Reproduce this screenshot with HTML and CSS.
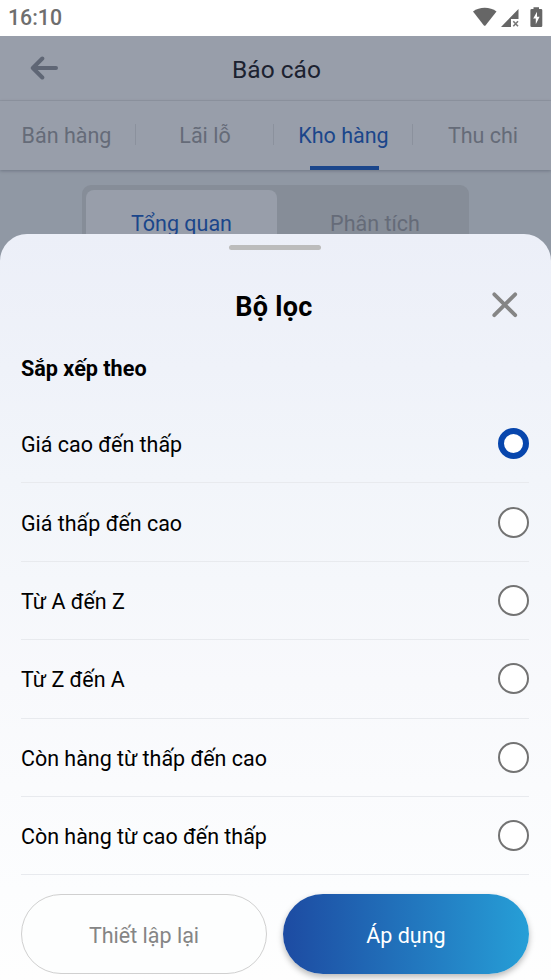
FILE: index.html
```html
<!DOCTYPE html>
<html lang="vi">
<head>
<meta charset="utf-8">
<title>Báo cáo</title>
<link rel="stylesheet" href="styles.css">
</head>
<body>
<div class="status">
  <span class="clock">16:10</span>
  <svg class="status-icons" width="78" height="36" viewBox="0 0 78 36" fill="#666">
    <path d="M0 11.6C6.500 6.600 17 6.600 23.500 11.600L12.700 25.300Q11.700 26.400 10.700 25.300Z"/>
    <path d="M45.500 9V19H38V27H28Z"/>
    <path d="M40.300 21.300L45 26.300M45 21.300L40.300 26.300" stroke="#777" stroke-width="1.600"/>
    <path d="M60.500 7.200H66V9H68Q69.300 9 69.300 10.300V25.700Q69.300 27 68 27H58.700Q57.400 27 57.400 25.700V10.300Q57.400 9 58.700 9H60.500Z"/>
    <path d="M64 11.800L60.200 18.600H62.800V24.300L66.600 16.800H64Z" fill="#fff"/>
  </svg>
</div>
<div class="page">
  <header class="header">
    <svg class="back" width="28" height="24" viewBox="0 0 28 24" fill="none" stroke="#5f6675" stroke-width="4" stroke-linecap="round" stroke-linejoin="round"><path d="M26 12H3M12.300 2.500L2.800 12L12.300 21.500"/></svg>
    <h1 class="title">Báo cáo</h1>
  </header>
  <nav class="tabs">
    <span class="tab">Bán hàng</span>
    <span class="tab">Lãi lỗ</span>
    <span class="tab tab-active">Kho hàng</span>
    <span class="tab">Thu chi</span>
  </nav>
  <div class="segments">
    <span class="segment segment-active">Tổng quan</span>
    <span class="segment">Phân tích</span>
  </div>
</div>
<section class="sheet">
  <div class="handle"></div>
  <div class="sheet-head">
    <h2 class="sheet-title">Bộ lọc</h2>
    <svg class="close" width="26" height="26" viewBox="0 0 26 26" stroke="#858585" stroke-width="3.800" stroke-linecap="round"><path d="M2.300 2.300L23.200 23.200M23.200 2.300L2.300 23.200"/></svg>
  </div>
  <h3 class="sort">Sắp xếp theo</h3>
  <ul class="options">
    <li class="option"><span>Giá cao đến thấp</span><i class="radio radio-on"></i></li>
    <li class="option"><span>Giá thấp đến cao</span><i class="radio"></i></li>
    <li class="option"><span>Từ A đến Z</span><i class="radio"></i></li>
    <li class="option"><span>Từ Z đến A</span><i class="radio"></i></li>
    <li class="option"><span>Còn hàng từ thấp đến cao</span><i class="radio"></i></li>
    <li class="option"><span>Còn hàng từ cao đến thấp</span><i class="radio"></i></li>
  </ul>
  <div class="actions">
    <button class="btn btn-reset">Thiết lập lại</button>
    <button class="btn btn-apply">Áp dụng</button>
  </div>
</section>
</body>
</html>
```
FILE: styles.css
```css
* { box-sizing: border-box; }
body {
  margin: 0;
  width: 551px;
  height: 980px;
  overflow: hidden;
  position: relative;
  background: #fff;
  font-family: Roboto, "Liberation Sans", sans-serif;
  font-size: 21.500px;
  color: #000;
}
h1, h2, h3, ul { margin: 0; padding: 0; font-size: inherit; }

.status {
  height: 36px;
  padding-left: 8px;
  display: flex;
  align-items: center;
  justify-content: space-between;
}
.clock { font-size: 21.300px; font-weight: 500; color: #6e6e6e; line-height: 36px; }

.page { height: 944px; background: #9098a4; }
.header {
  height: 65px;
  padding: 0 30px;
  display: grid;
  grid-template-columns: 28px 1fr 28px;
  align-items: center;
  background: #989eaa;
  border-bottom: 1px solid #9096a2;
}
.back { margin-bottom: 1px; }
.title { text-align: center; font-size: 24.500px; font-weight: 400; color: #1c2230; line-height: 60px; padding: 3px 0 0 2px; }
.tabs {
  height: 69px;
  display: grid;
  grid-template-columns: 136px 138px 139px 138px;
  background: #989eaa;
  box-shadow: 0 1px 3px rgba(60, 70, 85, .4);
}
.tab {
  position: relative;
  text-align: center;
  line-height: 69px;
  color: #656b78;
}
.tab:first-child { padding-right: 3px; }
.tab:last-child { padding-left: 2px; }
.tab:not(:last-child)::after {
  content: "";
  position: absolute;
  right: 0;
  top: 23px;
  width: 1px;
  height: 21px;
  background: #8b919d;
}
.tab-active { color: #1b468b; }
.tab-active::before {
  content: "";
  position: absolute;
  left: 36px;
  bottom: 0;
  width: 69px;
  height: 4px;
  background: #1b468b;
}
.segments {
  width: 387px;
  height: 78px;
  margin: 15px 0 0 82px;
  padding: 5px 0 5px 4px;
  display: grid;
  grid-template-columns: 191px 1fr;
  background: #868d98;
  border-radius: 9px;
}
.segment { text-align: center; line-height: 67px; color: #656b78; border-radius: 8px; padding-left: 4px; }
.segment-active { background: #989eaa; color: #1b468b; padding-left: 0; }

.sheet {
  position: absolute;
  left: 0;
  top: 234px;
  width: 551px;
  height: 746px;
  padding: 11px 22px 0 21px;
  border-radius: 27px 27px 0 0;
  background: linear-gradient(#eceff8 0%, #eff2f9 18%, #f2f5fa 33%, #f8f9fc 60%, #fcfdfe 88%, #fefefe 100%);
}
.handle { width: 92px; height: 5px; margin: 0 auto; border-radius: 3px; background: #bcbcbc; }
.sheet-head {
  height: 92px;
  padding: 0 11px 0 23px;
  display: grid;
  grid-template-columns: 12px 1fr 26px;
  align-items: center;
}
.sheet-title { grid-column: 2; text-align: center; font-size: 27px; font-weight: 700; letter-spacing: .3px; padding-top: 22px; line-height: 36px; }
.close { margin-top: 18px; }
.sort { font-size: 21.600px; font-weight: 700; line-height: 30px; margin-top: 12px; }
.options { list-style: none; margin-top: 21px; }
.option {
  height: 78.400px;
  display: flex;
  align-items: center;
  justify-content: space-between;
  border-bottom: 1.500px solid #e8eaee;
}
.option span { padding-top: 2px; font-size: 21.450px; }
.radio { width: 31px; height: 31px; border-radius: 50%; border: 2.500px solid #737373; background: #fff; }
.radio-on { border: 6px solid #0746ad; }
.actions { display: grid; grid-template-columns: 246px 246px; gap: 16px; margin-top: 19px; }
.btn {
  height: 80px;
  padding: 2px 0 0;
  border-radius: 40px;
  font: 400 21.500px Roboto, "Liberation Sans", sans-serif;
}
.btn-reset { border: 1.500px solid #d0d0d0; background: #fdfefe; color: #858585; }
.btn-apply {
  border: 0;
  color: #fff;
  background: linear-gradient(90deg, #1d4ba2, #2380c4 65%, #269fd7);
  box-shadow: 0 3px 6px rgba(0, 0, 0, .28);
}
```
